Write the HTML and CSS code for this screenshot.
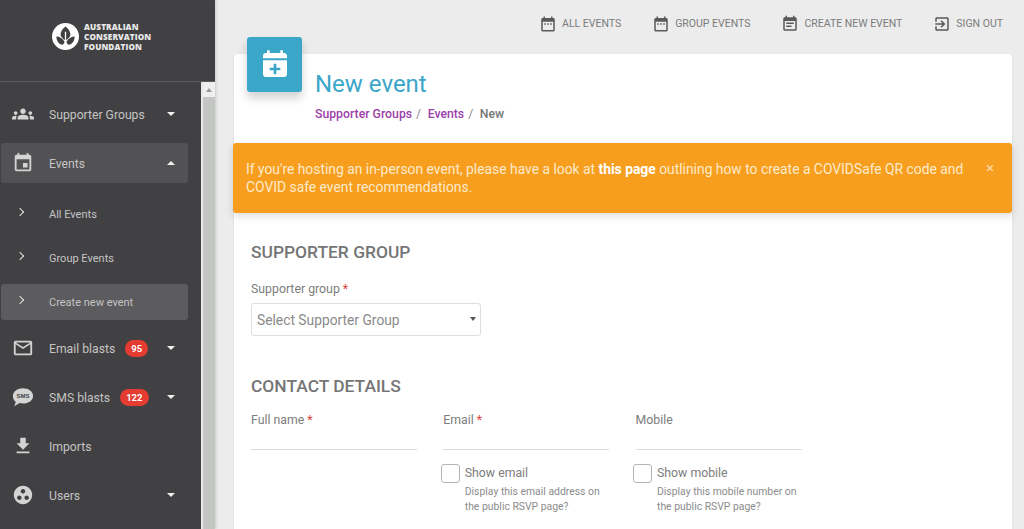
FILE: index.html
```html
<!DOCTYPE html>
<html>
<head>
    <title>New event</title>
    <link rel="stylesheet" href="styles.css">
</head>
<body>
    <aside class="sidebar">
        <div class="logo">
            <svg class="logo-mark" viewBox="0 0 28 28">
                <circle cx="14" cy="14" r="14" fill="#fff"/>
                <path d="M14 3.500c3.500 2.500 5.500 6 5 9.500-.500 2-2.500 3.500-4.300 5V9h-1.400v9c-1.800-1.500-3.800-3-4.300-5-.500-3.500 1.500-7 5-9.500z" fill="#414042"/>
                <path d="M13 19.500c-2-3.500-5-5.500-8.500-5.500 0 4.500 3 8.500 6 8.500 1 0 2-.800 2.500-3z" fill="#414042"/>
                <path d="M15 19.500c2-3.500 5-5.500 8.500-5.500 0 4.500-3 8.500-6 8.500-1 0-2-.800-2.500-3z" fill="#414042"/>
            </svg>
            <div class="logo-text">AUSTRALIAN<br>CONSERVATION<br>FOUNDATION</div>
        </div>
        <div class="sidebar-body">
            <nav class="menu">
                <a class="menu-item">
                    <svg class="menu-icon" viewBox="0 0 24 24"><path d="M12 12.750c1.630 0 3.070.390 4.240.900 1.080.480 1.760 1.560 1.760 2.730V18H6v-1.610c0-1.180.680-2.260 1.760-2.730 1.170-.520 2.610-.910 4.240-.910zM4 13c1.100 0 2-.900 2-2s-.900-2-2-2-2 .900-2 2 .900 2 2 2zm1.130 1.100c-.370-.060-.740-.100-1.130-.100-.990 0-1.930.210-2.780.580C.480 14.900 0 15.620 0 16.430V18h4.500v-1.610c0-.830.230-1.610.630-2.290zM20 13c1.100 0 2-.900 2-2s-.900-2-2-2-2 .900-2 2 .900 2 2 2zm4 3.430c0-.810-.480-1.530-1.220-1.850-.850-.370-1.790-.580-2.780-.580-.390 0-.760.040-1.130.100.400.680.630 1.460.630 2.290V18H24v-1.570zM12 6c1.660 0 3 1.340 3 3s-1.340 3-3 3-3-1.340-3-3 1.340-3 3-3z"/></svg>
                    <span>Supporter Groups</span>
                    <i class="caret"></i>
                </a>
                <a class="menu-item active">
                    <svg class="menu-icon" viewBox="0 0 24 24"><path d="M17 12h-5v5h5v-5zM16 1v2H8V1H6v2H5c-1.110 0-1.990.900-1.990 2L3 19c0 1.100.890 2 2 2h14c1.100 0 2-.900 2-2V5c0-1.100-.900-2-2-2h-1V1h-2zm3 18H5V8h14v11z"/></svg>
                    <span>Events</span>
                    <i class="caret up"></i>
                </a>
                <div class="submenu">
                    <a class="sub-item"><i class="chevron"></i><span>All Events</span></a>
                    <a class="sub-item"><i class="chevron"></i><span>Group Events</span></a>
                    <a class="sub-item current"><i class="chevron"></i><span>Create new event</span></a>
                </div>
                <a class="menu-item">
                    <svg class="menu-icon" viewBox="0 0 24 24"><path d="M20 4H4c-1.100 0-1.990.900-1.990 2L2 18c0 1.100.900 2 2 2h16c1.100 0 2-.900 2-2V6c0-1.100-.900-2-2-2zm0 14H4V8l8 5 8-5v10zm-8-7L4 6h16l-8 5z"/></svg>
                    <span>Email blasts</span>
                    <b class="badge">95</b>
                    <i class="caret"></i>
                </a>
                <a class="menu-item">
                    <svg class="menu-icon" viewBox="0 0 24 24">
                        <path d="M12 2.500c6.100 0 11 3.700 11 8.300s-4.900 8.300-11 8.300c-1.300 0-2.500-.200-3.700-.500L2.500 22l1.600-4.700C2 15.800 1 13.400 1 10.800 1 6.200 5.900 2.500 12 2.500z"/>
                        <text class="sms-text" x="12" y="13.200">SMS</text>
                    </svg>
                    <span>SMS blasts</span>
                    <b class="badge">122</b>
                    <i class="caret"></i>
                </a>
                <a class="menu-item">
                    <svg class="menu-icon" viewBox="0 0 24 24"><path d="M19 9h-4V3H9v6H5l7 7 7-7zM5 18v2h14v-2H5z"/></svg>
                    <span>Imports</span>
                </a>
                <a class="menu-item">
                    <svg class="menu-icon" viewBox="0 0 24 24"><path d="M12 2C6.480 2 2 6.480 2 12s4.480 10 10 10 10-4.480 10-10S17.520 2 12 2zM8 17.500c-1.380 0-2.500-1.120-2.500-2.500s1.120-2.500 2.500-2.500 2.500 1.120 2.500 2.500-1.120 2.500-2.500 2.500zM9.500 8c0-1.380 1.120-2.500 2.500-2.500s2.500 1.120 2.500 2.500-1.120 2.500-2.500 2.500S9.500 9.380 9.500 8zm6.500 9.500c-1.380 0-2.500-1.120-2.500-2.500s1.120-2.500 2.500-2.500 2.500 1.120 2.500 2.500-1.120 2.500-2.500 2.500z"/></svg>
                    <span>Users</span>
                    <i class="caret"></i>
                </a>
            </nav>
            <div class="scrollbar"><div class="scroll-up"></div></div>
        </div>
    </aside>

    <main class="main">
        <header class="topbar">
            <a class="top-link">
                <svg viewBox="0 0 24 24"><path d="M19 4h-1V2h-2v2H8V2H6v2H5c-1.100 0-2 .900-2 2v14c0 1.100.900 2 2 2h14c1.100 0 2-.900 2-2V6c0-1.100-.900-2-2-2zm0 16H5V9h14v11zM7 11h2v2H7zm4 0h2v2h-2zm4 0h2v2h-2z"/></svg>
                ALL EVENTS
            </a>
            <a class="top-link">
                <svg viewBox="0 0 24 24"><path d="M19 4h-1V2h-2v2H8V2H6v2H5c-1.100 0-2 .900-2 2v14c0 1.100.900 2 2 2h14c1.100 0 2-.900 2-2V6c0-1.100-.900-2-2-2zm0 16H5V9h14v11zM7 11h2v2H7zm4 0h2v2h-2zm4 0h2v2h-2z"/></svg>
                GROUP EVENTS
            </a>
            <a class="top-link">
                <svg viewBox="0 0 24 24"><path d="M17 10H7v2h10v-2zm2-7h-1V1h-2v2H8V1H6v2H5c-1.110 0-1.990.900-1.990 2L3 19c0 1.100.890 2 2 2h14c1.100 0 2-.900 2-2V5c0-1.100-.900-2-2-2zm0 16H5V8h14v11zm-5-5H7v2h7v-2z"/></svg>
                CREATE NEW EVENT
            </a>
            <a class="top-link">
                <svg viewBox="0 0 24 24"><path d="M10.090 15.590L11.500 17l5-5-5-5-1.410 1.410L12.670 11H3v2h9.670l-2.580 2.590zM19 3H5c-1.110 0-2 .900-2 2v4h2V5h14v14H5v-4H3v4c0 1.100.890 2 2 2h14c1.100 0 2-.900 2-2V5c0-1.100-.900-2-2-2z"/></svg>
                SIGN OUT
            </a>
        </header>

        <section class="card">
            <div class="card-header">
                <div class="card-icon">
                    <svg viewBox="0 0 24 24">
                        <path d="M19 3h-1V1h-2v2H8V1H6v2H5c-1.100 0-2 .900-2 2v2h18V5c0-1.100-.900-2-2-2zM3 8.500V19c0 1.100.900 2 2 2h14c1.100 0 2-.900 2-2V8.500H3z" fill="#fff"/>
                        <path d="M11 11h2v3h3v2h-3v3h-2v-3H8v-2h3z" fill="#3aa6c8"/>
                    </svg>
                </div>
                <div>
                    <h1>New event</h1>
                    <div class="breadcrumb">
                        <a>Supporter Groups</a><span class="sep">/</span><a>Events</a><span class="sep">/</span><span class="here">New</span>
                    </div>
                </div>
            </div>

            <div class="alert">
                <p>If you're hosting an in-person event, please have a look at <b>this page</b> outlining how to create a COVIDSafe QR code and COVID safe event recommendations.</p>
                <span class="alert-close">&times;</span>
            </div>

            <div class="form">
                <h2>SUPPORTER GROUP</h2>
                <label class="field-label">Supporter group <em>*</em></label>
                <div class="select">Select Supporter Group<i class="select-caret"></i></div>

                <h2 class="contact-title">CONTACT DETAILS</h2>
                <div class="field-row">
                    <div>
                        <label class="field-label">Full name <em>*</em></label>
                        <div class="line-input"></div>
                    </div>
                    <div>
                        <label class="field-label">Email <em>*</em></label>
                        <div class="line-input"></div>
                        <div class="check">
                            <span class="checkbox"></span>
                            <div>
                                <div class="check-label">Show email</div>
                                <div class="check-help">Display this email address on the public RSVP page?</div>
                            </div>
                        </div>
                    </div>
                    <div>
                        <label class="field-label">Mobile</label>
                        <div class="line-input"></div>
                        <div class="check">
                            <span class="checkbox"></span>
                            <div>
                                <div class="check-label">Show mobile</div>
                                <div class="check-help">Display this mobile number on the public RSVP page?</div>
                            </div>
                        </div>
                    </div>
                </div>
            </div>
        </section>
    </main>
</body>
</html>
```

FILE: styles.css
```css
* {
    box-sizing: border-box;
}
html, body {
    height: 100%;
}
body {
    margin: 0;
    display: flex;
    overflow: hidden;
    font-family: Roboto, "Liberation Sans", sans-serif;
    background-color: #ececec;
    color: #777;
}
.sidebar {
    width: 215px;
    flex-shrink: 0;
    height: 100%;
    display: flex;
    flex-direction: column;
    background-color: #414042;
    box-shadow: 1px 0 3px rgba(0,0,0,0.15);
}
.logo {
    height: 82px;
    flex-shrink: 0;
    display: flex;
    align-items: flex-start;
    padding: 23px 0 0 52px;
    gap: 5px;
    border-bottom: 1px solid #5c5b5d;
}
.logo-mark {
    width: 27px;
    height: 27px;
}
.logo-text {
    margin-top: -1px;
    font-family: "Open Sans", sans-serif;
    font-size: 8.2px;
    line-height: 10px;
    font-weight: 800;
    color: #e8e8e8;
    letter-spacing: 0.1px;
}
.sidebar-body {
    flex: 1;
    min-height: 0;
    display: flex;
    overflow: hidden;
}
.menu {
    width: 201px;
    padding: 12px 13px 0 1px;
    flex-shrink: 0;
}
.menu-item {
    height: 40px;
    margin-bottom: 9px;
    display: flex;
    align-items: center;
    padding-left: 11px;
    border-radius: 3px;
    font-size: 12.200px;
    color: #c4c4c4;
}
.menu-item span {
    margin-top: 2px;
}
.menu-item.active {
    background-color: #525153;
}
.menu-icon {
    width: 22px;
    height: 22px;
    margin-right: 15px;
    flex-shrink: 0;
    fill: #d4d4d4;
}
.sms-text {
    font-family: "Liberation Sans", sans-serif;
    font-size: 6.500px;
    font-weight: bold;
    text-anchor: middle;
    fill: #414042;
}
.caret {
    margin-left: auto;
    margin-right: 13px;
    width: 0;
    height: 0;
    border-left: 4px solid transparent;
    border-right: 4px solid transparent;
    border-top: 4px solid #f0f0f0;
}
.caret.up {
    border-top: none;
    border-bottom: 4px solid #f0f0f0;
}
.badge {
    margin-left: 10px;
    min-width: 23px;
    height: 17px;
    padding: 0 6px;
    border-radius: 9px;
    background-color: #e53c31;
    color: #fff;
    font-size: 9.500px;
    font-weight: 700;
    line-height: 17px;
    text-align: center;
}
.submenu {
    margin: 13px 0 8px;
    display: flex;
    flex-direction: column;
    gap: 8px;
}
.sub-item {
    height: 36px;
    display: flex;
    align-items: center;
    border-radius: 3px;
    font-size: 11px;
    color: #c4c4c4;
    padding-left: 16px;
}
.sub-item.current {
    background-color: #5c5b5d;
}
.chevron {
    width: 6px;
    height: 6px;
    margin: -4px 26px 0 0;
    border-top: 1.500px solid #e4e4e4;
    border-right: 1.500px solid #e4e4e4;
    transform: rotate(45deg);
}
.scrollbar {
    width: 14px;
    flex-shrink: 0;
    border-left: 2px solid #e8e8e8;
    background-color: #c3c6c3;
}
.scroll-up {
    height: 15px;
    background-color: #efefef;
    display: flex;
    align-items: center;
    justify-content: center;
}
.scroll-up::before {
    content: "";
    border-left: 3px solid transparent;
    border-right: 3px solid transparent;
    border-bottom: 4px solid #999;
}
.main {
    flex: 1;
    min-width: 0;
    height: 100%;
    display: flex;
    flex-direction: column;
    overflow: hidden;
    padding: 0 12px 0 19px;
}
.topbar {
    height: 54px;
    flex-shrink: 0;
    margin-right: 9px;
    display: flex;
    justify-content: flex-end;
    align-items: center;
    padding-bottom: 7px;
    gap: 31px;
}
.top-link {
    display: flex;
    align-items: center;
    gap: 5px;
    font-size: 10.500px;
    color: #7b7b7b;
}
.top-link svg {
    width: 18px;
    height: 18px;
    fill: #5a5a5a;
}
.card {
    flex: 1;
    background-color: #fff;
    border-radius: 4px 4px 0 0;
    box-shadow: 0 1px 3px rgba(0,0,0,0.08);
}
.card-header {
    height: 89px;
    display: flex;
    padding-left: 13px;
}
.card-icon {
    width: 55px;
    height: 55px;
    margin-top: -17px;
    margin-right: 13px;
    display: flex;
    align-items: center;
    justify-content: center;
    background-color: #3aa6c8;
    border-radius: 3px;
    box-shadow: 0 6px 10px rgba(0,0,0,0.18);
}
.card-icon svg {
    width: 32px;
    height: 32px;
}
h1 {
    margin: 15px 0 0;
    font-size: 24px;
    line-height: 30px;
    font-weight: 400;
    color: #3aa6c8;
}
.breadcrumb {
    margin-top: 7px;
    font-size: 12.250px;
    line-height: 16px;
    font-weight: 500;
}
.breadcrumb a {
    color: #9b3fa9;
}
.sep {
    margin: 0 6.500px 0 4px;
    font-weight: 400;
    color: #888;
}
.here {
    color: #777;
}
.alert {
    margin-left: -1px;
    height: 70px;
    padding: 17px 0 0 13px;
    display: flex;
    background-color: #f79e1f;
    border-radius: 3px;
    box-shadow: 0 3px 8px rgba(0,0,0,0.14);
    color: #fdeacb;
    font-size: 13.850px;
    line-height: 18px;
}
.alert p {
    margin: 0;
    width: 722px;
}
.alert b {
    color: #fff;
}
.alert-close {
    margin-left: 18px;
    font-size: 15px;
    line-height: 17px;
    color: #fbd9a6;
}
.form {
    padding: 28px 0 0 17px;
}
h2 {
    margin: 0;
    font-size: 17.400px;
    line-height: 22px;
    font-weight: 500;
    color: #757575;
}
.field-label {
    display: block;
    font-size: 12.300px;
    line-height: 16px;
    color: #7d7d7d;
}
.field-label em {
    color: #e0453a;
    font-style: normal;
}
h2 + .field-label {
    margin-top: 18px;
}
.select {
    position: relative;
    width: 230px;
    height: 33px;
    margin-top: 6px;
    padding-left: 5px;
    border: 1px solid #dedede;
    border-radius: 3px;
    font-size: 13.800px;
    line-height: 33px;
    color: #8a8a8a;
}
.select-caret {
    position: absolute;
    right: 4px;
    top: 13px;
    border-left: 3.500px solid transparent;
    border-right: 3.500px solid transparent;
    border-top: 4px solid #555;
}
.contact-title {
    margin-top: 39px;
    margin-bottom: 15px;
}
.field-row {
    display: grid;
    grid-template-columns: 166px 166px 166px;
    column-gap: 26.250px;
}
.line-input {
    height: 22px;
    border-bottom: 1px solid #dcdcdc;
}
.check {
    display: flex;
    gap: 5px;
    margin: 14px 0 0 -2.500px;
}
.checkbox {
    width: 19px;
    height: 19px;
    flex-shrink: 0;
    border: 1px solid #b5b5b5;
    border-radius: 3px;
}
.check-label {
    font-size: 12.300px;
    line-height: 18px;
    color: #7d7d7d;
}
.check-help {
    margin-top: 2px;
    font-size: 10.400px;
    line-height: 15px;
    color: #8c8c8c;
}
```
